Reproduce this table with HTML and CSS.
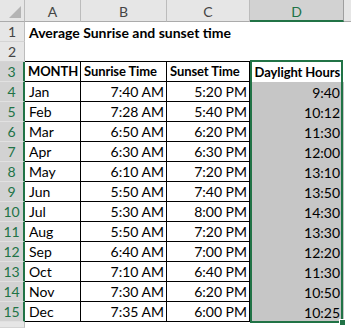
FILE: index.html
```html
<!DOCTYPE html>
<html>
<head>
<meta charset="utf-8">
<link rel="stylesheet" href="styles.css">
</head>
<body>
<div class="sheet">
  <div class="grid">
    <div class="corner"><span class="tri"></span></div>
    <div class="ch">A</div>
    <div class="ch">B</div>
    <div class="ch">C</div>
    <div class="ch ch-sel">D</div>
    <div class="ch ch-rest"></div>

    <div class="rh">1</div>
    <div class="c title">Average Sunrise and sunset time</div>
    <div class="c"></div>
    <div class="c"></div>
    <div class="c"></div>
    <div class="c"></div>

    <div class="rh">2</div>
    <div class="c tb-top"></div>
    <div class="c tb-top"></div>
    <div class="c tb-top"></div>
    <div class="c"></div>
    <div class="c"></div>

    <div class="rh rh-sel">3</div>
    <div class="c t first b">MONTH</div>
    <div class="c t b">Sunrise Time</div>
    <div class="c t b">Sunset Time</div>
    <div class="c d d-active b">Daylight Hours</div>
    <div class="c"></div>

    <div class="rh rh-sel">4</div><div class="c t first">Jan</div><div class="c t r">7:40 AM</div><div class="c t r">5:20 PM</div><div class="c d r">9:40</div><div class="c"></div>
    <div class="rh rh-sel">5</div><div class="c t first">Feb</div><div class="c t r">7:28 AM</div><div class="c t r">5:40 PM</div><div class="c d r">10:12</div><div class="c"></div>
    <div class="rh rh-sel">6</div><div class="c t first">Mar</div><div class="c t r">6:50 AM</div><div class="c t r">6:20 PM</div><div class="c d r">11:30</div><div class="c"></div>
    <div class="rh rh-sel">7</div><div class="c t first">Apr</div><div class="c t r">6:30 AM</div><div class="c t r">6:30 PM</div><div class="c d r">12:00</div><div class="c"></div>
    <div class="rh rh-sel">8</div><div class="c t first">May</div><div class="c t r">6:10 AM</div><div class="c t r">7:20 PM</div><div class="c d r">13:10</div><div class="c"></div>
    <div class="rh rh-sel">9</div><div class="c t first">Jun</div><div class="c t r">5:50 AM</div><div class="c t r">7:40 PM</div><div class="c d r">13:50</div><div class="c"></div>
    <div class="rh rh-sel">10</div><div class="c t first">Jul</div><div class="c t r">5:30 AM</div><div class="c t r">8:00 PM</div><div class="c d r">14:30</div><div class="c"></div>
    <div class="rh rh-sel">11</div><div class="c t first">Aug</div><div class="c t r">5:50 AM</div><div class="c t r">7:20 PM</div><div class="c d r">13:30</div><div class="c"></div>
    <div class="rh rh-sel">12</div><div class="c t first">Sep</div><div class="c t r">6:40 AM</div><div class="c t r">7:00 PM</div><div class="c d r">12:20</div><div class="c"></div>
    <div class="rh rh-sel">13</div><div class="c t first">Oct</div><div class="c t r">7:10 AM</div><div class="c t r">6:40 PM</div><div class="c d r">11:30</div><div class="c"></div>
    <div class="rh rh-sel">14</div><div class="c t first">Nov</div><div class="c t r">7:30 AM</div><div class="c t r">6:20 PM</div><div class="c d r">10:50</div><div class="c"></div>
    <div class="rh rh-sel">15</div><div class="c t first">Dec</div><div class="c t r">7:35 AM</div><div class="c t r">6:00 PM</div><div class="c d r">10:25</div><div class="c"></div>

    <div class="rh"></div><div class="c"></div><div class="c"></div><div class="c"></div><div class="c"></div><div class="c"></div>
  </div>
  <div class="selection"><span class="handle"></span></div>
</div>
</body>
</html>
```
FILE: styles.css
```css
* { box-sizing: border-box; }
html, body { margin: 0; padding: 0; background: #fff; }
body {
  font-family: Lato, "Liberation Sans", sans-serif;
  font-size: 14px;
  color: #000;
}
.sheet { position: relative; width: 351px; height: 328px; overflow: hidden; }
.grid {
  display: grid;
  grid-template-columns: 25px 56px 86px 83px 94px 7px;
  grid-template-rows: 22px repeat(15, 20px) 6px;
}
.corner {
  position: relative;
  background: #e6e6e6;
  border-right: 1px solid #bcbcbc;
  border-bottom: 1px solid #ababab;
}
.tri {
  position: absolute;
  right: 3px;
  bottom: 3px;
  width: 0; height: 0;
  border-left: 12px solid transparent;
  border-bottom: 12px solid #b4b4b4;
}
.ch {
  background: #e6e6e6;
  color: #444;
  border-right: 1px solid #bcbcbc;
  border-bottom: 1px solid #ababab;
  display: flex;
  align-items: center;
  justify-content: center;
  padding-top: 2px;
}
.ch-sel {
  background: #d2d2d2;
  color: #217346;
  border-bottom: 2px solid #217346;
  border-right: 1px solid #9f9f9f;
}
.ch-rest { border-right: none; }
.rh {
  background: #e6e6e6;
  color: #444;
  border-right: 1px solid #bcbcbc;
  border-bottom: 1px solid #d4d4d4;
  display: flex;
  align-items: flex-end;
  justify-content: center;
  padding-bottom: 1px;
  line-height: 17px;
}
.rh-sel {
  background: #d2d2d2;
  color: #217346;
  border-right: 2px solid #217346;
  border-bottom: 1px solid #e1e1e1;
}
.c {
  display: flex;
  align-items: flex-end;
  padding: 0 3px 1px 3px;
  line-height: 17px;
  white-space: nowrap;
}
.title {
  overflow: visible;
  font-weight: 700;
  padding-left: 4px;
}
.tb-top { border-bottom: 1px solid #000; }
.t { border-right: 1px solid #000; border-bottom: 1px solid #000; }
.first { padding-left: 4px; }
.b { font-weight: 700; font-size: 13px; letter-spacing: -0.1px; }
.t.b { padding-left: 3px; }
.r { justify-content: flex-end; padding-right: 2px; }
.d {
  background: #c6c6c6;
  justify-content: flex-end;
  padding-right: 4px;
}
.d-active { background: #fff; }
.selection {
  position: absolute;
  left: 250px;
  top: 60px;
  width: 93px;
  height: 263px;
  border: 2px solid #217346;
  pointer-events: none;
}
.handle {
  position: absolute;
  right: -5px;
  bottom: -5px;
  width: 7px;
  height: 7px;
  background: #217346;
  border: 1px solid #fff;
}
```
